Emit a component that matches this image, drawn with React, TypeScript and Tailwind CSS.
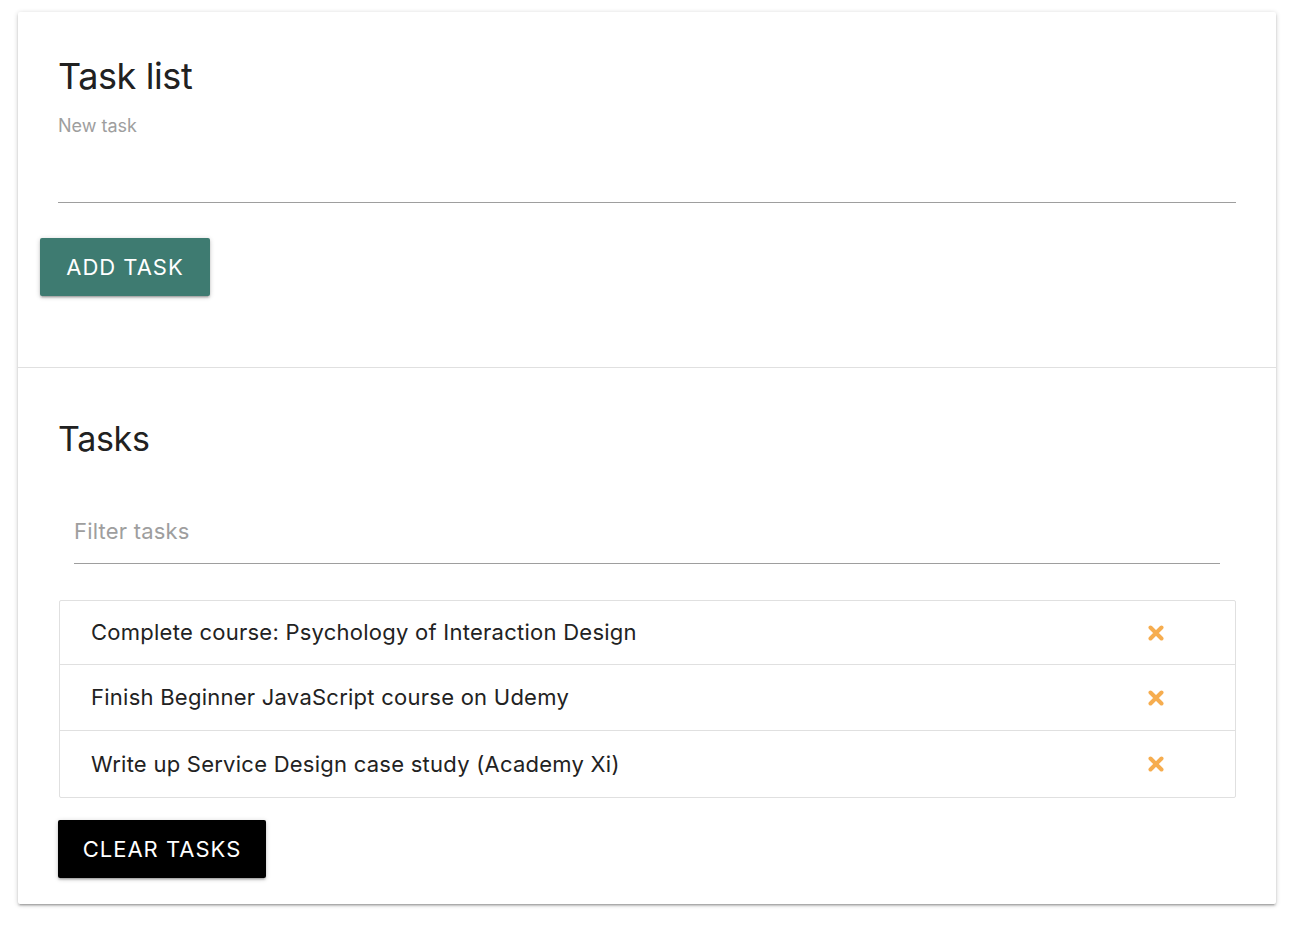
const tasks = [
  "Complete course: Psychology of Interaction Design",
  "Finish Beginner JavaScript course on Udemy",
  "Write up Service Design case study (Academy Xi)",
]

const rowHeights = ["h-[64px] border-b border-[#e0e0e0]", "h-[66px] border-b border-[#e0e0e0]", "h-[66px]"]

const cardShadow =
  "shadow-[0_2px_2px_0_rgba(0,0,0,0.14),0_3px_1px_-2px_rgba(0,0,0,0.12),0_1px_5px_0_rgba(0,0,0,0.2)]"

function CloseIcon() {
  return (
    <svg width="16" height="16" viewBox="0 0 16 16" className="shrink-0">
      <path d="M2.5 2.5 L13.5 13.5 M13.5 2.5 L2.5 13.5" stroke="#f6ad4f" strokeWidth="4" strokeLinecap="round" />
    </svg>
  )
}

export default function App() {
  return (
    <div className="min-h-[934px] bg-white font-['Inter','Liberation_Sans',sans-serif] text-[#212121] pt-[12px]">
      <div className={`ml-[18px] w-[1258px] bg-white rounded-[2px] ${cardShadow}`}>
        {/* Add task */}
        <div className="pt-[42px] px-[40px]">
          <h1 className="text-[36px] leading-[44px] font-normal tracking-[-0.4px]">Task list</h1>
          <label className="block mt-[18px] text-[18px] leading-[20px] text-[#9e9e9e]">New task</label>
          <div className="h-[67px] border-b border-[#9e9e9e]" />
        </div>
        <div className="px-[22px] pt-[35px] pb-[71px]">
          <button
            className={`h-[58px] w-[170px] rounded-[2px] bg-[#3e7b71] text-white text-[22px] tracking-[1px] ${cardShadow}`}
          >
            ADD TASK
          </button>
        </div>

        {/* Tasks */}
        <div className="border-t border-[#e0e0e0] pt-[50px] px-[40px] pb-[26px]">
          <h2 className="text-[34px] leading-[42px] font-normal tracking-[-0.3px]">Tasks</h2>
          <div className="mx-[16px] mt-[48px] h-[56px] border-b border-[#9e9e9e]">
            <span className="block text-[22px] leading-[46px] text-[#9e9e9e] tracking-[0.2px]">Filter tasks</span>
          </div>
          <ul className="mt-[36px] ml-[1px] border border-[#e0e0e0] rounded-[2px]">
            {tasks.map((t, i) => (
              <li
                key={t}
                className={`flex items-center justify-between pl-[31px] pr-[71px] text-[22px] tracking-[0.25px] text-[#222] ${rowHeights[i]}`}
              >
                <span>{t}</span>
                <CloseIcon />
              </li>
            ))}
          </ul>
          <button
            className={`mt-[22px] h-[58px] w-[208px] rounded-[2px] bg-black text-white text-[22px] tracking-[1px] ${cardShadow}`}
          >
            CLEAR TASKS
          </button>
        </div>
      </div>
    </div>
  )
}
